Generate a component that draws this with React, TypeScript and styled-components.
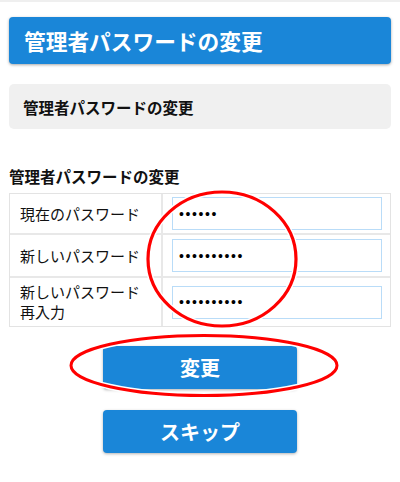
import React from "react";
import styled, { createGlobalStyle } from "styled-components";

const Global = createGlobalStyle`
  html, body { margin: 0; padding: 0; background: #fff; }
  body {
    font-family: "Noto Sans CJK JP", "Noto Sans", sans-serif;
    color: #111;
  }
`;

const Page = styled.div`
  position: relative;
  width: 400px;
  height: 482px;
  border-top: 2px solid #efefef;
  box-sizing: border-box;
  padding: 15px 9px 0;
`;

const Header = styled.h1`
  margin: 0;
  height: 47px;
  background: #1a86d8;
  border-radius: 4px;
  box-shadow: 0 1px 3px rgba(0, 0, 0, 0.35);
  color: #fff;
  font-size: 21.7px;
  font-weight: 700;
  display: flex;
  align-items: center;
  padding-left: 15px;
`;

const Notice = styled.div`
  margin-top: 20px;
  height: 45px;
  background: #f0f0f0;
  border-radius: 5px;
  font-size: 15.5px;
  font-weight: 700;
  display: flex;
  align-items: center;
  padding-left: 14px;
`;

const SectionTitle = styled.h2`
  margin: 37px 0 7px;
  font-size: 15.5px;
  line-height: 20px;
  font-weight: 700;
`;

const Table = styled.div`
  display: grid;
  grid-template-columns: 153px 1fr;
  grid-template-rows: 41px 43px 48px;
  border: 1px solid #e3e3e3;
`;

const LabelCell = styled.div<{ $last?: boolean }>`
  display: flex;
  align-items: center;
  padding: 0 8px 0 10px;
  font-size: 15px;
  line-height: 20px;
  border-right: 2px solid #e8e8e8;
  border-bottom: ${(p) => (p.$last ? "none" : "2px solid #e8e8e8")};
`;

const InputCell = styled.div<{ $last?: boolean }>`
  display: flex;
  align-items: center;
  padding: 0 8px 0 9px;
  border-bottom: ${(p) => (p.$last ? "none" : "2px solid #e8e8e8")};
`;

const PwInput = styled.input`
  width: 100%;
  height: 33px;
  box-sizing: border-box;
  border: 1px solid #b9dcf8;
  border-radius: 0;
  outline: none;
  padding: 0 6px;
  font-family: "Liberation Sans", sans-serif;
  font-size: 14px;
  letter-spacing: 1.6px;
  color: #000;
  background: #fff;
`;

const Buttons = styled.div`
  display: flex;
  flex-direction: column;
  align-items: center;
  gap: 21px;
  margin-top: 19px;
`;

const Button = styled.button`
  width: 194px;
  height: 43px;
  border: none;
  border-radius: 4px;
  background: #1a86d8;
  color: #fff;
  font-family: "Noto Sans CJK JP", "Noto Sans", sans-serif;
  font-size: 20px;
  font-weight: 700;
  box-shadow: 0 1px 3px rgba(0, 0, 0, 0.3);
  cursor: pointer;
`;

const Marks = styled.svg`
  position: absolute;
  left: 0;
  top: -2px;
  pointer-events: none;
`;

export default function App() {
  return (
    <>
      <Global />
      <Page>
        <Header>管理者パスワードの変更</Header>
        <Notice>管理者パスワードの変更</Notice>
        <SectionTitle>管理者パスワードの変更</SectionTitle>
        <Table>
          <LabelCell>現在のパスワード</LabelCell>
          <InputCell>
            <PwInput type="password" defaultValue="aaaaaa" readOnly />
          </InputCell>
          <LabelCell>新しいパスワード</LabelCell>
          <InputCell>
            <PwInput type="password" defaultValue="aaaaaaaaaa" readOnly />
          </InputCell>
          <LabelCell $last>新しいパスワード再入力</LabelCell>
          <InputCell $last>
            <PwInput type="password" defaultValue="aaaaaaaaaa" readOnly />
          </InputCell>
        </Table>
        <Buttons>
          <Button>変更</Button>
          <Button>スキップ</Button>
        </Buttons>
        <Marks width="400" height="482" viewBox="0 0 400 482">
          <ellipse cx="222" cy="259" rx="74" ry="67" fill="none" stroke="#fff" strokeWidth="6" />
          <ellipse cx="222" cy="259" rx="74" ry="67" fill="none" stroke="#f00" strokeWidth="3.2" />
          <ellipse cx="204" cy="365.5" rx="133" ry="30" fill="none" stroke="#fff" strokeWidth="6" />
          <ellipse cx="204" cy="365.5" rx="133" ry="30" fill="none" stroke="#f00" strokeWidth="3" />
        </Marks>
      </Page>
    </>
  );
}
